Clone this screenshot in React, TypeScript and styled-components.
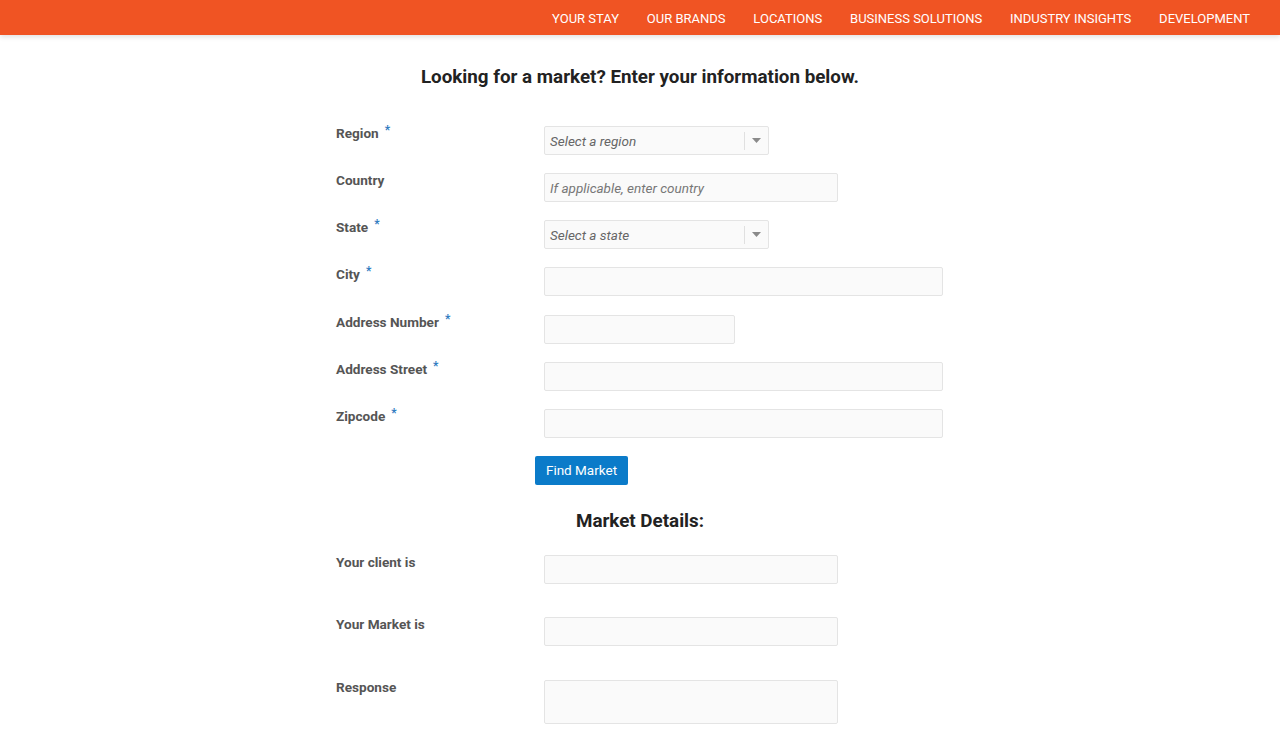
import styled, { createGlobalStyle } from 'styled-components';

const GlobalStyle = createGlobalStyle`
  html, body {
    margin: 0;
    padding: 0;
    background: #ffffff;
    font-family: Roboto, "Helvetica Neue", Arial, sans-serif;
  }
`;

const navItems = ['YOUR STAY', 'OUR BRANDS', 'LOCATIONS', 'BUSINESS SOLUTIONS', 'INDUSTRY INSIGHTS', 'DEVELOPMENT'];

interface Field {
  label: string;
  required?: boolean;
  kind: 'select' | 'input';
  placeholder?: string;
  width: number;
}

const lookupFields: Field[] = [
  { label: 'Region', required: true, kind: 'select', placeholder: 'Select a region', width: 225 },
  { label: 'Country', kind: 'input', placeholder: 'If applicable, enter country', width: 294 },
  { label: 'State', required: true, kind: 'select', placeholder: 'Select a state', width: 225 },
  { label: 'City', required: true, kind: 'input', width: 399 },
  { label: 'Address Number', required: true, kind: 'input', width: 191 },
  { label: 'Address Street', required: true, kind: 'input', width: 399 },
  { label: 'Zipcode', required: true, kind: 'input', width: 399 },
];

const detailFields = [
  { label: 'Your client is', height: 29 },
  { label: 'Your Market is', height: 29 },
  { label: 'Response', height: 44 },
];

export default function App() {
  return (
    <>
      <GlobalStyle />
      <Header>
        <Nav>
          {navItems.map((item) => (
            <NavLink key={item}>{item}</NavLink>
          ))}
        </Nav>
      </Header>
      <Main>
        <Title>Looking for a market? Enter your information below.</Title>
        <FormGrid>
          {lookupFields.map((field) => (
            <Row key={field.label}>
              <Label>
                {field.label}
                {field.required && <Required>*</Required>}
              </Label>
              {field.kind === 'select' ? (
                <SelectBox $width={field.width}>
                  <SelectText>{field.placeholder}</SelectText>
                  <SelectArrow>
                    <svg width="9" height="5" viewBox="0 0 9 5">
                      <path d="M0 0 L9 0 L4.5 5 Z" fill="#8a8a8a" />
                    </svg>
                  </SelectArrow>
                </SelectBox>
              ) : (
                <TextInput $width={field.width} placeholder={field.placeholder} />
              )}
            </Row>
          ))}
        </FormGrid>
        <ButtonRow>
          <SubmitButton>Find Market</SubmitButton>
        </ButtonRow>
        <SubTitle>Market Details:</SubTitle>
        <DetailsGrid>
          {detailFields.map((field) => (
            <Row key={field.label}>
              <Label>{field.label}</Label>
              <OutputBox $height={field.height} />
            </Row>
          ))}
        </DetailsGrid>
      </Main>
    </>
  );
}

const Header = styled.header`
  height: 35px;
  background-color: #f05423;
  box-shadow: 0 2px 5px rgba(0, 0, 0, 0.12);
  display: flex;
  justify-content: flex-end;
  align-items: center;
`;

const Nav = styled.nav`
  display: flex;
  gap: 27.8px;
  padding-right: 30px;
`;

const NavLink = styled.a`
  color: #ffffff;
  font-size: 13px;
  line-height: 16px;
  cursor: pointer;
  padding-top: 2px;
`;

const Main = styled.main`
  width: 608px;
  margin: 0 auto;
  padding-top: 30px;
`;

const Title = styled.h1`
  margin: 0;
  text-align: center;
  font-size: 18.8px;
  line-height: 24px;
  font-weight: 700;
  color: #222222;
`;

const FormGrid = styled.div`
  display: flex;
  flex-direction: column;
  gap: 18.17px;
  margin-top: 37px;
`;

const Row = styled.div`
  display: grid;
  grid-template-columns: 208px 1fr;
  align-items: start;
`;

const Label = styled.label`
  font-size: 13.6px;
  line-height: 16px;
  font-weight: 700;
  color: #555555;
  margin-top: -1px;
`;

const Required = styled.sup`
  color: #2f7bbf;
  font-size: 12px;
  margin-left: 6px;
  vertical-align: 4px;
  line-height: 0;
`;

const fieldBase = `
  box-sizing: border-box;
  height: 29px;
  background: #fafafa;
  border: 1px solid #e4e4e4;
  border-radius: 2px;
  font-family: Roboto, "Helvetica Neue", Arial, sans-serif;
  font-size: 13.5px;
`;

const TextInput = styled.input<{ $width: number }>`
  ${fieldBase}
  width: ${(p) => p.$width}px;
  padding: 0 5px;
  outline: none;

  &::placeholder {
    color: #777777;
    font-style: italic;
  }
`;

const SelectBox = styled.div<{ $width: number }>`
  ${fieldBase}
  width: ${(p) => p.$width}px;
  display: flex;
  align-items: center;
`;

const SelectText = styled.span`
  flex: 1;
  padding-left: 5px;
  color: #666666;
  font-style: italic;
`;

const SelectArrow = styled.span`
  width: 23px;
  height: 18px;
  border-left: 1px solid #e0e0e0;
  display: flex;
  align-items: center;
  justify-content: center;
`;

const ButtonRow = styled.div`
  padding-left: 199px;
  margin-top: 18px;
`;

const SubmitButton = styled.button`
  height: 29px;
  width: 93px;
  border: none;
  border-radius: 2px;
  background-color: #0b7bc9;
  color: #ffffff;
  font-family: Roboto, "Helvetica Neue", Arial, sans-serif;
  font-size: 13.5px;
  cursor: pointer;
`;

const SubTitle = styled.h2`
  margin: 25px 0 0 0;
  text-align: center;
  font-size: 18.8px;
  line-height: 22px;
  font-weight: 700;
  color: #222222;
`;

const DetailsGrid = styled.div`
  display: flex;
  flex-direction: column;
  gap: 33.5px;
  margin-top: 23px;
`;

const OutputBox = styled.div<{ $height: number }>`
  ${fieldBase}
  width: 294px;
  height: ${(p) => p.$height}px;
`;
